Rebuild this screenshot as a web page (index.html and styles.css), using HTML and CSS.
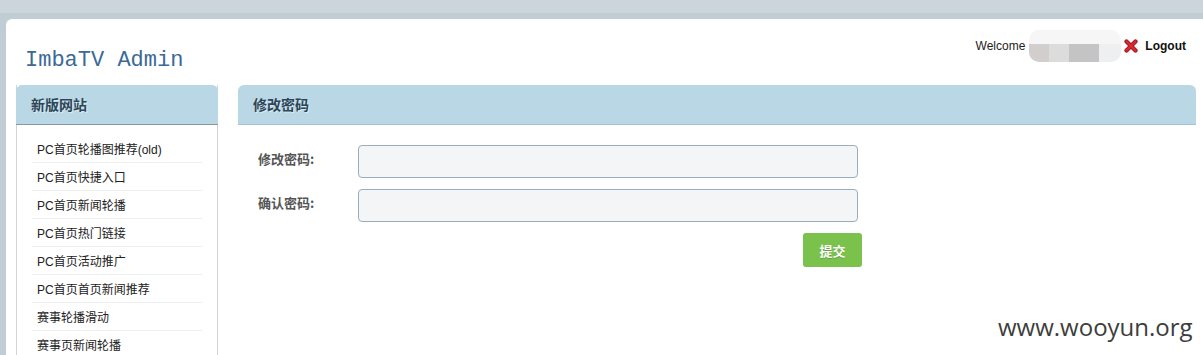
FILE: index.html
```html
<!DOCTYPE html>
<html lang="zh-CN">
  <head>
    <meta charset="UTF-8" />
    <meta name="viewport" content="width=device-width, initial-scale=1.0" />
    <title>ImbaTV Admin</title>
    <link rel="stylesheet" href="styles.css">
  </head>
  <body>
    <div class="frame">
      <div class="container">
        <!-- 顶部 -->
        <div class="header">
          <h1 class="logo">ImbaTV Admin</h1>
          <div class="user-bar">
            <span class="welcome">Welcome</span>
            <span class="user-name">
              <span class="px p1"></span><span class="px p2"></span><span class="px p3"></span><span class="px p4"></span>
            </span>
            <a href="#" class="logout">
              <svg class="logout-icon" width="14" height="14" viewBox="0 0 14 14">
                <path d="M2.5 2.5 L11.5 11.5 M11.5 2.5 L2.5 11.5" stroke="#8e1118" stroke-width="4.2" stroke-linecap="round" />
                <path d="M2.5 2.5 L11.5 11.5 M11.5 2.5 L2.5 11.5" stroke="#d9262f" stroke-width="2.6" stroke-linecap="round" />
              </svg>
              Logout
            </a>
          </div>
        </div>

        <div class="layout">
          <!-- 左侧菜单 -->
          <div class="sidebar">
            <div class="box-head">新版网站</div>
            <ul class="menu">
              <li><a href="#">PC首页轮播图推荐(old)</a></li>
              <li><a href="#">PC首页快捷入口</a></li>
              <li><a href="#">PC首页新闻轮播</a></li>
              <li><a href="#">PC首页热门链接</a></li>
              <li><a href="#">PC首页活动推广</a></li>
              <li><a href="#">PC首页首页新闻推荐</a></li>
              <li><a href="#">赛事轮播滑动</a></li>
              <li><a href="#">赛事页新闻轮播</a></li>
            </ul>
          </div>

          <!-- 内容 -->
          <div class="main">
            <div class="box-head main-head">修改密码</div>
            <form class="form">
              <div class="form-row">
                <label class="form-label">修改密码:</label>
                <input type="password" class="form-input">
              </div>
              <div class="form-row">
                <label class="form-label">确认密码:</label>
                <input type="password" class="form-input">
              </div>
              <div class="form-actions">
                <button type="button" class="btn-submit">提交</button>
              </div>
            </form>
          </div>
        </div>
      </div>
    </div>
    <div class="watermark">www.wooyun.org</div>
  </body>
</html>
```

FILE: styles.css
```css
* {
  margin: 0;
  padding: 0;
  box-sizing: border-box;
}

body {
  background: #cdd5dc;
  font-family: "Liberation Sans", Arial, "Noto Sans CJK SC", sans-serif;
  font-size: 12px;
  color: #222;
  height: 355px;
  overflow: hidden;
  padding-top: 13px;
}

.frame {
  background: #c0cdd4;
  padding: 6px 0 0 6px;
  height: 100%;
}

.container {
  display: flex;
  flex-direction: column;
  background: #fff;
  border-top-left-radius: 6px;
  height: 100%;
  padding: 0 7px 0 10px;
}

.header {
  display: flex;
  justify-content: space-between;
  height: 66px;
  flex-shrink: 0;
}

.logo {
  font-family: "Liberation Mono", "Courier New", monospace;
  font-weight: normal;
  font-size: 22px;
  color: #3a6a96;
  padding: 29px 0 0 9px;
}

.user-bar {
  display: flex;
  align-items: center;
  height: 32px;
  margin-top: 11px;
  padding-right: 10px;
}

.welcome {
  color: #222;
}

.user-name {
  display: grid;
  grid-template-columns: 20px 20px 30px 22px;
  grid-template-rows: 14px 18px;
  width: 92px;
  height: 32px;
  margin-left: 4px;
  border-radius: 10px;
  overflow: hidden;
  background: #f6f6f6;
  filter: blur(0.6px);
}

.px {
  grid-row: 2;
}

.p1 { background: #d2cecd; }
.p2 { background: #dcdcdc; }
.p3 { background: #c5c4c4; }
.p4 { background: #eeeff1; }

.logout {
  display: flex;
  align-items: center;
  gap: 7px;
  margin-left: 3px;
  font-weight: bold;
  color: #111;
  text-decoration: none;
}

.layout {
  flex: 1;
  display: flex;
  gap: 20px;
  overflow: hidden;
}

.sidebar {
  width: 202px;
  flex-shrink: 0;
  border-left: 1px solid #d0d5d8;
  border-right: 1px solid #d0d5d8;
}

.box-head {
  background: #b9d7e4;
  border-radius: 6px 6px 0 0;
  height: 40px;
  line-height: 39px;
  padding-left: 15px;
  font-family: "Noto Sans CJK SC", sans-serif;
  font-size: 14px;
  font-weight: bold;
  color: #2c4658;
  text-shadow: 1px 1px 0 rgba(255, 255, 255, 0.5);
  border-bottom: 1px solid #8c979e;
}

.sidebar .box-head {
  margin: 0 -1px;
}

.menu {
  list-style: none;
  padding: 10px 15px 0 15px;
}

.menu li {
  height: 28px;
  border-bottom: 1px solid #eceeef;
}

.menu a {
  display: block;
  line-height: 30px;
  padding-left: 5px;
  font-size: 12px;
  color: #222;
  text-decoration: none;
}

.main {
  flex: 1;
}

.main-head {
  border-radius: 6px 6px 0 0;
  border-bottom: 1px solid #a6c4d3;
}

.form {
  width: 624px;
  padding: 20px 0 0 20px;
}

.form-row {
  display: flex;
  align-items: center;
  margin-bottom: 11px;
}

.form-label {
  width: 100px;
  margin-bottom: 6px;
  font-family: "Noto Sans CJK SC", sans-serif;
  font-size: 13px;
  font-weight: bold;
  color: #555;
}

.form-input {
  width: 500px;
  height: 33px;
  background: #f3f5f7;
  border: 1px solid #99adbd;
  border-radius: 4px;
}

.form-actions {
  display: flex;
  justify-content: flex-end;
}

.btn-submit {
  width: 59px;
  height: 34px;
  background: #7bc24d;
  border: none;
  border-radius: 3px;
  color: #fff;
  font-family: "Noto Sans CJK SC", sans-serif;
  font-size: 13px;
  font-weight: bold;
  text-shadow: 0 1px 0 rgba(0, 0, 0, 0.2);
}

.watermark {
  position: absolute;
  left: 998px;
  top: 310px;
  font-family: "Open Sans", sans-serif;
  font-size: 24px;
  color: #3d3d3d;
}
```
